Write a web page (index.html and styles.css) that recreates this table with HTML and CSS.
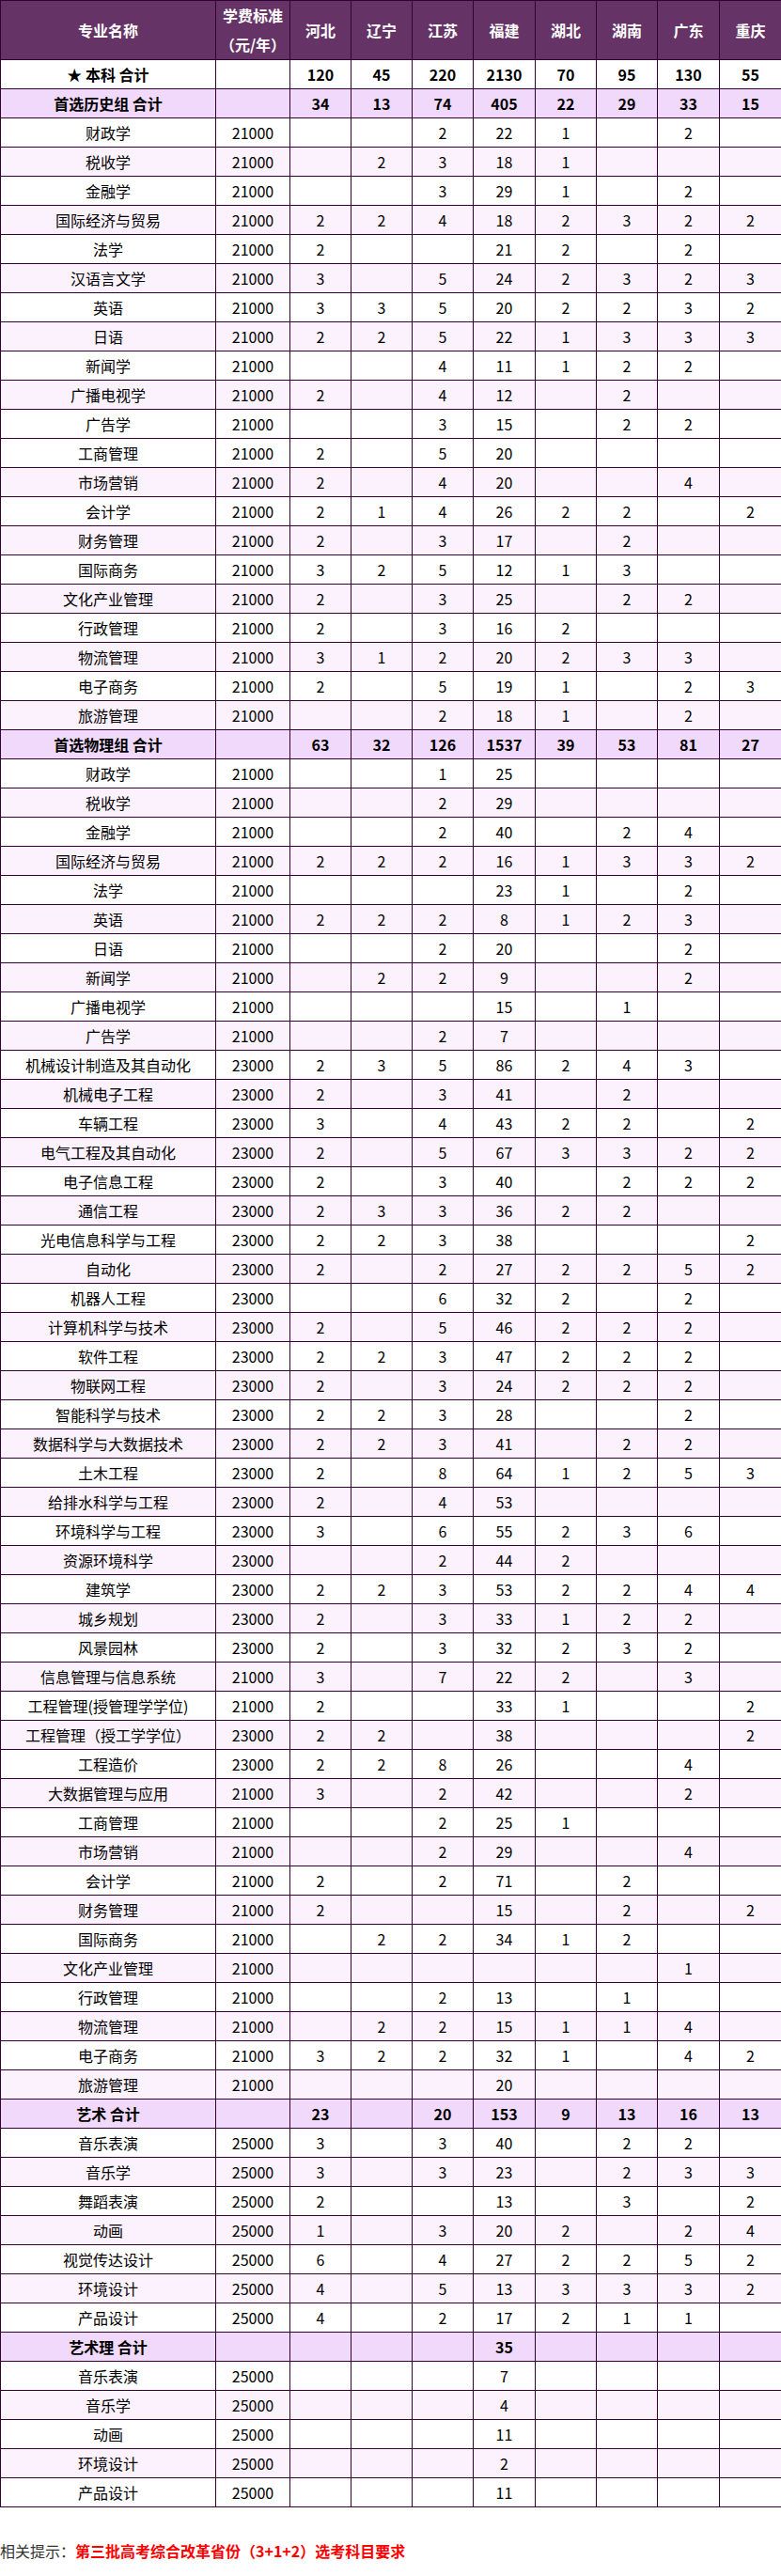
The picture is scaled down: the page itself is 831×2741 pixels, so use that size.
FILE: index.html
```html
<!DOCTYPE html>
<html lang="zh-CN">
<head>
<meta charset="utf-8">
<title>招生计划</title>
<link rel="stylesheet" href="styles.css">
</head>
<body>
<table class="plan">
<colgroup>
<col class="c-name"><col class="c-fee"><col class="c-n"><col class="c-n"><col class="c-n"><col class="c-w"><col class="c-n"><col class="c-n"><col class="c-w"><col class="c-w">
</colgroup>
<thead>
<tr class="head"><th>专业名称</th><th>学费标准<br>（元/年）</th><th>河北</th><th>辽宁</th><th>江苏</th><th>福建</th><th>湖北</th><th>湖南</th><th>广东</th><th>重庆</th></tr>
</thead>
<tbody>
<tr class="total-all"><td>★ 本科 合计</td><td></td><td>120</td><td>45</td><td>220</td><td>2130</td><td>70</td><td>95</td><td>130</td><td>55</td></tr>
<tr class="sum"><td>首选历史组 合计</td><td></td><td>34</td><td>13</td><td>74</td><td>405</td><td>22</td><td>29</td><td>33</td><td>15</td></tr>
<tr><td>财政学</td><td>21000</td><td></td><td></td><td>2</td><td>22</td><td>1</td><td></td><td>2</td><td></td></tr>
<tr class="alt"><td>税收学</td><td>21000</td><td></td><td>2</td><td>3</td><td>18</td><td>1</td><td></td><td></td><td></td></tr>
<tr><td>金融学</td><td>21000</td><td></td><td></td><td>3</td><td>29</td><td>1</td><td></td><td>2</td><td></td></tr>
<tr class="alt"><td>国际经济与贸易</td><td>21000</td><td>2</td><td>2</td><td>4</td><td>18</td><td>2</td><td>3</td><td>2</td><td>2</td></tr>
<tr><td>法学</td><td>21000</td><td>2</td><td></td><td></td><td>21</td><td>2</td><td></td><td>2</td><td></td></tr>
<tr class="alt"><td>汉语言文学</td><td>21000</td><td>3</td><td></td><td>5</td><td>24</td><td>2</td><td>3</td><td>2</td><td>3</td></tr>
<tr><td>英语</td><td>21000</td><td>3</td><td>3</td><td>5</td><td>20</td><td>2</td><td>2</td><td>3</td><td>2</td></tr>
<tr class="alt"><td>日语</td><td>21000</td><td>2</td><td>2</td><td>5</td><td>22</td><td>1</td><td>3</td><td>3</td><td>3</td></tr>
<tr><td>新闻学</td><td>21000</td><td></td><td></td><td>4</td><td>11</td><td>1</td><td>2</td><td>2</td><td></td></tr>
<tr class="alt"><td>广播电视学</td><td>21000</td><td>2</td><td></td><td>4</td><td>12</td><td></td><td>2</td><td></td><td></td></tr>
<tr><td>广告学</td><td>21000</td><td></td><td></td><td>3</td><td>15</td><td></td><td>2</td><td>2</td><td></td></tr>
<tr><td>工商管理</td><td>21000</td><td>2</td><td></td><td>5</td><td>20</td><td></td><td></td><td></td><td></td></tr>
<tr class="alt"><td>市场营销</td><td>21000</td><td>2</td><td></td><td>4</td><td>20</td><td></td><td></td><td>4</td><td></td></tr>
<tr><td>会计学</td><td>21000</td><td>2</td><td>1</td><td>4</td><td>26</td><td>2</td><td>2</td><td></td><td>2</td></tr>
<tr class="alt"><td>财务管理</td><td>21000</td><td>2</td><td></td><td>3</td><td>17</td><td></td><td>2</td><td></td><td></td></tr>
<tr><td>国际商务</td><td>21000</td><td>3</td><td>2</td><td>5</td><td>12</td><td>1</td><td>3</td><td></td><td></td></tr>
<tr class="alt"><td>文化产业管理</td><td>21000</td><td>2</td><td></td><td>3</td><td>25</td><td></td><td>2</td><td>2</td><td></td></tr>
<tr><td>行政管理</td><td>21000</td><td>2</td><td></td><td>3</td><td>16</td><td>2</td><td></td><td></td><td></td></tr>
<tr class="alt"><td>物流管理</td><td>21000</td><td>3</td><td>1</td><td>2</td><td>20</td><td>2</td><td>3</td><td>3</td><td></td></tr>
<tr><td>电子商务</td><td>21000</td><td>2</td><td></td><td>5</td><td>19</td><td>1</td><td></td><td>2</td><td>3</td></tr>
<tr class="alt"><td>旅游管理</td><td>21000</td><td></td><td></td><td>2</td><td>18</td><td>1</td><td></td><td>2</td><td></td></tr>
<tr class="sum"><td>首选物理组 合计</td><td></td><td>63</td><td>32</td><td>126</td><td>1537</td><td>39</td><td>53</td><td>81</td><td>27</td></tr>
<tr><td>财政学</td><td>21000</td><td></td><td></td><td>1</td><td>25</td><td></td><td></td><td></td><td></td></tr>
<tr class="alt"><td>税收学</td><td>21000</td><td></td><td></td><td>2</td><td>29</td><td></td><td></td><td></td><td></td></tr>
<tr><td>金融学</td><td>21000</td><td></td><td></td><td>2</td><td>40</td><td></td><td>2</td><td>4</td><td></td></tr>
<tr class="alt"><td>国际经济与贸易</td><td>21000</td><td>2</td><td>2</td><td>2</td><td>16</td><td>1</td><td>3</td><td>3</td><td>2</td></tr>
<tr><td>法学</td><td>21000</td><td></td><td></td><td></td><td>23</td><td>1</td><td></td><td>2</td><td></td></tr>
<tr class="alt"><td>英语</td><td>21000</td><td>2</td><td>2</td><td>2</td><td>8</td><td>1</td><td>2</td><td>3</td><td></td></tr>
<tr><td>日语</td><td>21000</td><td></td><td></td><td>2</td><td>20</td><td></td><td></td><td>2</td><td></td></tr>
<tr class="alt"><td>新闻学</td><td>21000</td><td></td><td>2</td><td>2</td><td>9</td><td></td><td></td><td>2</td><td></td></tr>
<tr><td>广播电视学</td><td>21000</td><td></td><td></td><td></td><td>15</td><td></td><td>1</td><td></td><td></td></tr>
<tr class="alt"><td>广告学</td><td>21000</td><td></td><td></td><td>2</td><td>7</td><td></td><td></td><td></td><td></td></tr>
<tr><td>机械设计制造及其自动化</td><td>23000</td><td>2</td><td>3</td><td>5</td><td>86</td><td>2</td><td>4</td><td>3</td><td></td></tr>
<tr class="alt"><td>机械电子工程</td><td>23000</td><td>2</td><td></td><td>3</td><td>41</td><td></td><td>2</td><td></td><td></td></tr>
<tr><td>车辆工程</td><td>23000</td><td>3</td><td></td><td>4</td><td>43</td><td>2</td><td>2</td><td></td><td>2</td></tr>
<tr class="alt"><td>电气工程及其自动化</td><td>23000</td><td>2</td><td></td><td>5</td><td>67</td><td>3</td><td>3</td><td>2</td><td>2</td></tr>
<tr><td>电子信息工程</td><td>23000</td><td>2</td><td></td><td>3</td><td>40</td><td></td><td>2</td><td>2</td><td>2</td></tr>
<tr class="alt"><td>通信工程</td><td>23000</td><td>2</td><td>3</td><td>3</td><td>36</td><td>2</td><td>2</td><td></td><td></td></tr>
<tr><td>光电信息科学与工程</td><td>23000</td><td>2</td><td>2</td><td>3</td><td>38</td><td></td><td></td><td></td><td>2</td></tr>
<tr class="alt"><td>自动化</td><td>23000</td><td>2</td><td></td><td>2</td><td>27</td><td>2</td><td>2</td><td>5</td><td>2</td></tr>
<tr><td>机器人工程</td><td>23000</td><td></td><td></td><td>6</td><td>32</td><td>2</td><td></td><td>2</td><td></td></tr>
<tr class="alt"><td>计算机科学与技术</td><td>23000</td><td>2</td><td></td><td>5</td><td>46</td><td>2</td><td>2</td><td>2</td><td></td></tr>
<tr><td>软件工程</td><td>23000</td><td>2</td><td>2</td><td>3</td><td>47</td><td>2</td><td>2</td><td>2</td><td></td></tr>
<tr class="alt"><td>物联网工程</td><td>23000</td><td>2</td><td></td><td>3</td><td>24</td><td>2</td><td>2</td><td>2</td><td></td></tr>
<tr><td>智能科学与技术</td><td>23000</td><td>2</td><td>2</td><td>3</td><td>28</td><td></td><td></td><td>2</td><td></td></tr>
<tr class="alt"><td>数据科学与大数据技术</td><td>23000</td><td>2</td><td>2</td><td>3</td><td>41</td><td></td><td>2</td><td>2</td><td></td></tr>
<tr><td>土木工程</td><td>23000</td><td>2</td><td></td><td>8</td><td>64</td><td>1</td><td>2</td><td>5</td><td>3</td></tr>
<tr class="alt"><td>给排水科学与工程</td><td>23000</td><td>2</td><td></td><td>4</td><td>53</td><td></td><td></td><td></td><td></td></tr>
<tr><td>环境科学与工程</td><td>23000</td><td>3</td><td></td><td>6</td><td>55</td><td>2</td><td>3</td><td>6</td><td></td></tr>
<tr class="alt"><td>资源环境科学</td><td>23000</td><td></td><td></td><td>2</td><td>44</td><td>2</td><td></td><td></td><td></td></tr>
<tr><td>建筑学</td><td>23000</td><td>2</td><td>2</td><td>3</td><td>53</td><td>2</td><td>2</td><td>4</td><td>4</td></tr>
<tr class="alt"><td>城乡规划</td><td>23000</td><td>2</td><td></td><td>3</td><td>33</td><td>1</td><td>2</td><td>2</td><td></td></tr>
<tr><td>风景园林</td><td>23000</td><td>2</td><td></td><td>3</td><td>32</td><td>2</td><td>3</td><td>2</td><td></td></tr>
<tr class="alt"><td>信息管理与信息系统</td><td>21000</td><td>3</td><td></td><td>7</td><td>22</td><td>2</td><td></td><td>3</td><td></td></tr>
<tr><td>工程管理(授管理学学位)</td><td>21000</td><td>2</td><td></td><td></td><td>33</td><td>1</td><td></td><td></td><td>2</td></tr>
<tr class="alt"><td>工程管理（授工学学位）</td><td>23000</td><td>2</td><td>2</td><td></td><td>38</td><td></td><td></td><td></td><td>2</td></tr>
<tr><td>工程造价</td><td>23000</td><td>2</td><td>2</td><td>8</td><td>26</td><td></td><td></td><td>4</td><td></td></tr>
<tr class="alt"><td>大数据管理与应用</td><td>21000</td><td>3</td><td></td><td>2</td><td>42</td><td></td><td></td><td>2</td><td></td></tr>
<tr><td>工商管理</td><td>21000</td><td></td><td></td><td>2</td><td>25</td><td>1</td><td></td><td></td><td></td></tr>
<tr class="alt"><td>市场营销</td><td>21000</td><td></td><td></td><td>2</td><td>29</td><td></td><td></td><td>4</td><td></td></tr>
<tr><td>会计学</td><td>21000</td><td>2</td><td></td><td>2</td><td>71</td><td></td><td>2</td><td></td><td></td></tr>
<tr class="alt"><td>财务管理</td><td>21000</td><td>2</td><td></td><td></td><td>15</td><td></td><td>2</td><td></td><td>2</td></tr>
<tr><td>国际商务</td><td>21000</td><td></td><td>2</td><td>2</td><td>34</td><td>1</td><td>2</td><td></td><td></td></tr>
<tr class="alt"><td>文化产业管理</td><td>21000</td><td></td><td></td><td></td><td></td><td></td><td></td><td>1</td><td></td></tr>
<tr><td>行政管理</td><td>21000</td><td></td><td></td><td>2</td><td>13</td><td></td><td>1</td><td></td><td></td></tr>
<tr class="alt"><td>物流管理</td><td>21000</td><td></td><td>2</td><td>2</td><td>15</td><td>1</td><td>1</td><td>4</td><td></td></tr>
<tr><td>电子商务</td><td>21000</td><td>3</td><td>2</td><td>2</td><td>32</td><td>1</td><td></td><td>4</td><td>2</td></tr>
<tr class="alt"><td>旅游管理</td><td>21000</td><td></td><td></td><td></td><td>20</td><td></td><td></td><td></td><td></td></tr>
<tr class="sum"><td>艺术 合计</td><td></td><td>23</td><td></td><td>20</td><td>153</td><td>9</td><td>13</td><td>16</td><td>13</td></tr>
<tr><td>音乐表演</td><td>25000</td><td>3</td><td></td><td>3</td><td>40</td><td></td><td>2</td><td>2</td><td></td></tr>
<tr class="alt"><td>音乐学</td><td>25000</td><td>3</td><td></td><td>3</td><td>23</td><td></td><td>2</td><td>3</td><td>3</td></tr>
<tr><td>舞蹈表演</td><td>25000</td><td>2</td><td></td><td></td><td>13</td><td></td><td>3</td><td></td><td>2</td></tr>
<tr class="alt"><td>动画</td><td>25000</td><td>1</td><td></td><td>3</td><td>20</td><td>2</td><td></td><td>2</td><td>4</td></tr>
<tr><td>视觉传达设计</td><td>25000</td><td>6</td><td></td><td>4</td><td>27</td><td>2</td><td>2</td><td>5</td><td>2</td></tr>
<tr class="alt"><td>环境设计</td><td>25000</td><td>4</td><td></td><td>5</td><td>13</td><td>3</td><td>3</td><td>3</td><td>2</td></tr>
<tr><td>产品设计</td><td>25000</td><td>4</td><td></td><td>2</td><td>17</td><td>2</td><td>1</td><td>1</td><td></td></tr>
<tr class="sum"><td>艺术理 合计</td><td></td><td></td><td></td><td></td><td>35</td><td></td><td></td><td></td><td></td></tr>
<tr><td>音乐表演</td><td>25000</td><td></td><td></td><td></td><td>7</td><td></td><td></td><td></td><td></td></tr>
<tr class="alt"><td>音乐学</td><td>25000</td><td></td><td></td><td></td><td>4</td><td></td><td></td><td></td><td></td></tr>
<tr><td>动画</td><td>25000</td><td></td><td></td><td></td><td>11</td><td></td><td></td><td></td><td></td></tr>
<tr class="alt"><td>环境设计</td><td>25000</td><td></td><td></td><td></td><td>2</td><td></td><td></td><td></td><td></td></tr>
<tr><td>产品设计</td><td>25000</td><td></td><td></td><td></td><td>11</td><td></td><td></td><td></td><td></td></tr>
</tbody>
</table>
<p class="note">相关提示：<strong class="note-link">第三批高考综合改革省份（3+1+2）选考科目要求</strong></p>
</body>
</html>
```
FILE: styles.css
```css
html, body {
  margin: 0;
  padding: 0;
  background: #ffffff;
}
body {
  font-family: "Microsoft YaHei", "Noto Sans CJK SC", "Noto Sans", sans-serif;
  font-size: 16px;
  color: #000000;
}
.plan {
  width: 831px;
  border-collapse: collapse;
  table-layout: fixed;
}
.c-name { width: 229px; }
.c-fee { width: 79px; }
.c-n { width: 65px; }
.c-w { width: 66px; }
.plan th,
.plan td {
  border: 1px solid #330033;
  padding: 0;
  text-align: center;
  vertical-align: middle;
  white-space: nowrap;
}
.plan td {
  height: 30px;
  line-height: 20px;
}
.head th {
  height: 60px;
  background: #663366;
  color: #ffffff;
  font-weight: bold;
  line-height: 31px;
}
.total-all td {
  font-weight: bold;
  background: #ffffff;
}
.sum td {
  font-weight: bold;
  background: #f1d9fb;
}
.alt td {
  background: #fcf2fd;
}
.note {
  margin: 0;
  padding-top: 34px;
  line-height: 24px;
  color: #333333;
  font-size: 16px;
}
.note-link {
  color: #ff0000;
  font-weight: bold;
}
```
